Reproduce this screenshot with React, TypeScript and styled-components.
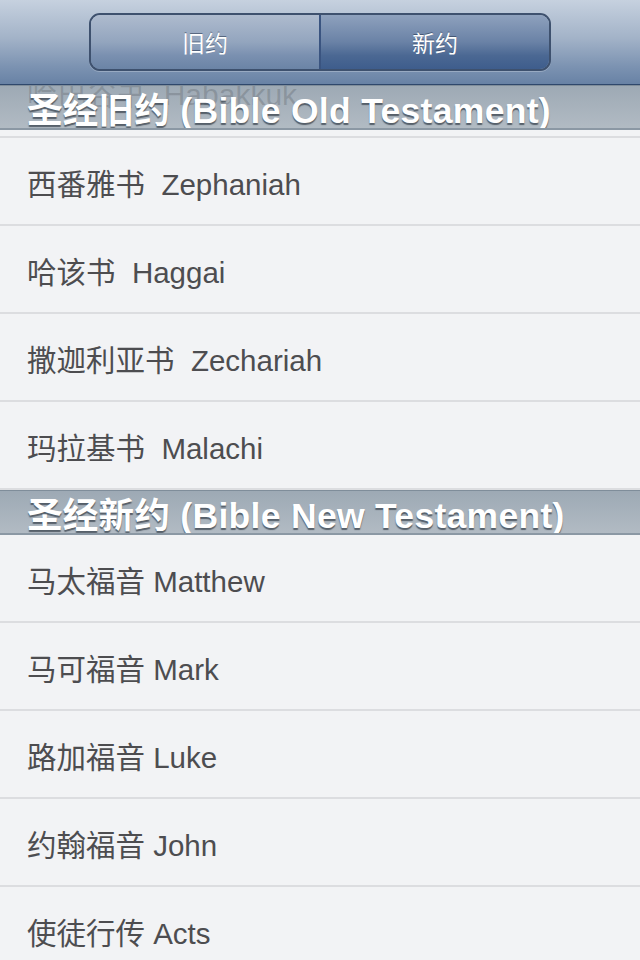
import React from "react";
import styled, { createGlobalStyle } from "styled-components";

const GlobalStyle = createGlobalStyle`
  html, body {
    margin: 0;
    padding: 0;
    background: #f2f3f5;
  }
  body {
    font-family: "Liberation Sans", "Noto Sans CJK SC", sans-serif;
  }
`;

const Screen = styled.div`
  width: 640px;
  height: 960px;
  overflow: hidden;
  background: #f2f3f5;
  display: flex;
  flex-direction: column;
`;

const NavBar = styled.header`
  height: 85px;
  flex: none;
  display: flex;
  align-items: center;
  justify-content: center;
  background: linear-gradient(to bottom, #c6d1df 0%, #a3b3c8 45%, #7b92b1 80%, #6882a5 100%);
  border-bottom: 1px solid #2f486c;
  box-sizing: border-box;
  position: relative;
  z-index: 2;
`;

const Segmented = styled.div`
  width: 462px;
  height: 58px;
  margin-top: -1px;
  display: flex;
  border: 2px solid #3e516e;
  border-radius: 11px;
  overflow: hidden;
  box-sizing: border-box;
  box-shadow: 0 1px 0 rgba(255, 255, 255, 0.25);
`;

const Segment = styled.div<{ $active?: boolean }>`
  flex: 1;
  display: flex;
  align-items: center;
  justify-content: center;
  color: #ffffff;
  font-size: 23px;
  text-shadow: 0 -1px 0 rgba(30, 45, 70, 0.55);
  background: ${(p) =>
    p.$active
      ? "linear-gradient(to bottom, #8ea1bd 0%, #6a82a6 50%, #4b6893 75%, #3e5d8c 100%)"
      : "linear-gradient(to bottom, #aebbce 0%, #93a5be 50%, #7a90b0 75%, #6b84a6 100%)"};
  & + & {
    border-left: 2px solid #3a5480;
  }
`;

const SectionHeader = styled.div`
  height: 45px;
  flex: none;
  box-sizing: border-box;
  position: relative;
  overflow: hidden;
  display: flex;
  align-items: center;
  padding-left: 27px;
  background: linear-gradient(to bottom, rgba(150, 163, 175, 0.92) 0%, rgba(172, 182, 191, 0.92) 100%);
  border-top: 1px solid #7f8d9a;
  border-bottom: 2px solid #8b98a4;
`;

// the row scrolled under the sticky header shows faintly through it
const GhostText = styled.div`
  position: absolute;
  left: 27px;
  top: -16px;
  font-size: 30px;
  color: rgba(70, 75, 80, 0.25);
  white-space: pre;
`;

const HeaderTitle = styled.span`
  position: relative;
  font-size: 35.5px;
  font-weight: bold;
  letter-spacing: 0.3px;
  color: #ffffff;
  white-space: pre;
  text-shadow: 0 2px 1px rgba(70, 80, 90, 0.85);
`;

const RowTail = styled.div`
  height: 6px;
  flex: none;
  border-bottom: 2px solid #dcdde0;
`;

const Row = styled.div`
  height: 88px;
  flex: none;
  box-sizing: border-box;
  display: flex;
  align-items: center;
  padding-left: 27px;
  padding-top: 2px;
  border-bottom: 2px solid #dcdde0;
  background: #f2f3f5;
  font-size: 29.5px;
  color: #4d4d50;
  white-space: pre;
`;

const oldBooks = ["西番雅书  Zephaniah", "哈该书  Haggai", "撒迦利亚书  Zechariah", "玛拉基书  Malachi"];
const newBooks = ["马太福音 Matthew", "马可福音 Mark", "路加福音 Luke", "约翰福音 John", "使徒行传 Acts"];

export default function App() {
  return (
    <Screen>
      <GlobalStyle />
      <NavBar>
        <Segmented>
          <Segment>旧约</Segment>
          <Segment $active>新约</Segment>
        </Segmented>
      </NavBar>
      <SectionHeader>
        <GhostText>哈巴谷书  Habakkuk</GhostText>
        <HeaderTitle>圣经旧约 (Bible Old Testament)</HeaderTitle>
      </SectionHeader>
      <RowTail />
      {oldBooks.map((b) => (
        <Row key={b}>{b}</Row>
      ))}
      <SectionHeader>
        <HeaderTitle>圣经新约 (Bible New Testament)</HeaderTitle>
      </SectionHeader>
      {newBooks.map((b) => (
        <Row key={b}>{b}</Row>
      ))}
    </Screen>
  );
}
